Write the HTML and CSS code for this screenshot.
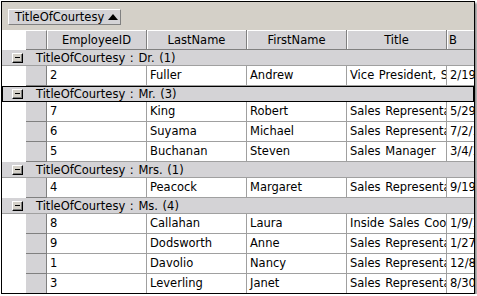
FILE: index.html
```
<!DOCTYPE html>
<html>
<head>
<meta charset="utf-8">
<link rel="stylesheet" href="styles.css">
</head>
<body>
<div class="frame">
  <div class="group-panel">
    <div class="group-btn"><span>TitleOfCourtesy</span><span class="tri"></span></div>
  </div>
  <div class="hrow">
    <div class="indent"></div>
    <div class="hind"></div>
    <div class="hcell">EmployeeID</div>
    <div class="hcell">LastName</div>
    <div class="hcell">FirstName</div>
    <div class="hcell">Title</div>
    <div class="hcell last"><span class="clip">BirthDate</span></div>
  </div>

  <div class="grow"><span class="exp"></span><span class="gtext">TitleOfCourtesy : Dr. (1)</span></div>
  <div class="row"><div class="indent"></div><div class="ind"></div><div class="cell">2</div><div class="cell">Fuller</div><div class="cell">Andrew</div><div class="cell">Vice President, Sales</div><div class="cell last">2/19/1952</div></div>

  <div class="grow focus"><span class="exp"></span><span class="gtext">TitleOfCourtesy : Mr. (3)</span></div>
  <div class="row"><div class="indent"></div><div class="ind"></div><div class="cell">7</div><div class="cell">King</div><div class="cell">Robert</div><div class="cell">Sales Representative</div><div class="cell last">5/29/1960</div></div>
  <div class="row"><div class="indent"></div><div class="ind"></div><div class="cell">6</div><div class="cell">Suyama</div><div class="cell">Michael</div><div class="cell">Sales Representative</div><div class="cell last">7/2/1963</div></div>
  <div class="row"><div class="indent"></div><div class="ind"></div><div class="cell">5</div><div class="cell">Buchanan</div><div class="cell">Steven</div><div class="cell">Sales Manager</div><div class="cell last">3/4/1955</div></div>

  <div class="grow"><span class="exp"></span><span class="gtext">TitleOfCourtesy : Mrs. (1)</span></div>
  <div class="row"><div class="indent"></div><div class="ind"></div><div class="cell">4</div><div class="cell">Peacock</div><div class="cell">Margaret</div><div class="cell">Sales Representative</div><div class="cell last">9/19/1937</div></div>

  <div class="grow"><span class="exp"></span><span class="gtext">TitleOfCourtesy : Ms. (4)</span></div>
  <div class="row"><div class="indent"></div><div class="ind"></div><div class="cell">8</div><div class="cell">Callahan</div><div class="cell">Laura</div><div class="cell">Inside Sales Coordinator</div><div class="cell last">1/9/1958</div></div>
  <div class="row"><div class="indent"></div><div class="ind"></div><div class="cell">9</div><div class="cell">Dodsworth</div><div class="cell">Anne</div><div class="cell">Sales Representative</div><div class="cell last">1/27/1966</div></div>
  <div class="row"><div class="indent"></div><div class="ind"></div><div class="cell">1</div><div class="cell">Davolio</div><div class="cell">Nancy</div><div class="cell">Sales Representative</div><div class="cell last">12/8/1948</div></div>
  <div class="row"><div class="indent"></div><div class="ind"></div><div class="cell">3</div><div class="cell">Leverling</div><div class="cell">Janet</div><div class="cell">Sales Representative</div><div class="cell last">8/30/1963</div></div>
</div>
</body>
</html>
```
FILE: styles.css
```
html, body {
  margin: 0;
  padding: 0;
  background: #fff;
}
body {
  font-family: "DejaVu Sans", Verdana, sans-serif;
  font-size: 11.5px;
  word-spacing: 1px;
  color: #000;
}
.frame {
  margin: 1px 0 0 1px;
  width: 472px;
  height: 291px;
  border: 1px solid #000;
  box-shadow: 2px 2px 2px rgba(0, 0, 0, 0.45);
  overflow: hidden;
  background: #fff;
}
.group-panel {
  height: 28px;
  box-sizing: border-box;
  padding: 7px 0 0 6px;
  background: #d4d0c8;
}
.group-btn {
  width: 113px;
  height: 16px;
  box-sizing: border-box;
  border: 1px solid;
  border-color: #fff #808080 #808080 #fff;
  background: #d4d3d6;
  display: flex;
  align-items: center;
  padding-left: 6px;
  line-height: 13px;
}
.tri {
  width: 0;
  height: 0;
  margin-left: 4px;
  border-left: 5px solid transparent;
  border-right: 5px solid transparent;
  border-bottom: 6px solid #000;
}
.hrow, .row {
  display: flex;
  height: 20px;
  white-space: nowrap;
}
.indent {
  width: 24px;
  flex: none;
  background: #fff;
}
.hind, .ind {
  width: 21px;
  flex: none;
  box-sizing: border-box;
  background: #d4d3d6;
  border-right: 1px solid #808080;
  border-bottom: 1px solid #808080;
}
.hind {
  border-top: 1px solid #fff;
}
.hcell, .cell {
  width: 100px;
  flex: none;
  box-sizing: border-box;
  overflow: hidden;
  border-right: 1px solid #a0a0a0;
  border-bottom: 1px solid #a0a0a0;
  line-height: 19px;
}
.hcell {
  background: #d4d3d6;
  text-align: center;
  border-right-color: #808080;
  border-bottom-color: #808080;
  box-shadow: inset 1px 1px 0 #fff;
  line-height: 20px;
}
.hcell.last {
  text-align: left;
  padding-left: 2px;
}
.clip {
  display: inline-block;
  width: 8px;
  overflow: hidden;
  vertical-align: top;
}
.cell {
  padding-left: 3px;
}
.grow {
  height: 16px;
  box-sizing: border-box;
  background: #d4d3d6;
  border-bottom: 1px solid #a0a0a0;
  display: flex;
  align-items: center;
  white-space: nowrap;
}
.grow.focus {
  outline: 1px solid #000;
  outline-offset: -1px;
}
.exp {
  width: 11px;
  height: 10px;
  box-sizing: border-box;
  margin-left: 10px;
  flex: none;
  border: 1px solid;
  border-color: #fff #000 #000 #fff;
  box-shadow: inset -1px -1px 0 #808080;
  background: #d4d0c8 linear-gradient(#000, #000) no-repeat 2px 3px / 5px 1px;
}
.gtext {
  margin-left: 13px;
  line-height: 14px;
}
```
